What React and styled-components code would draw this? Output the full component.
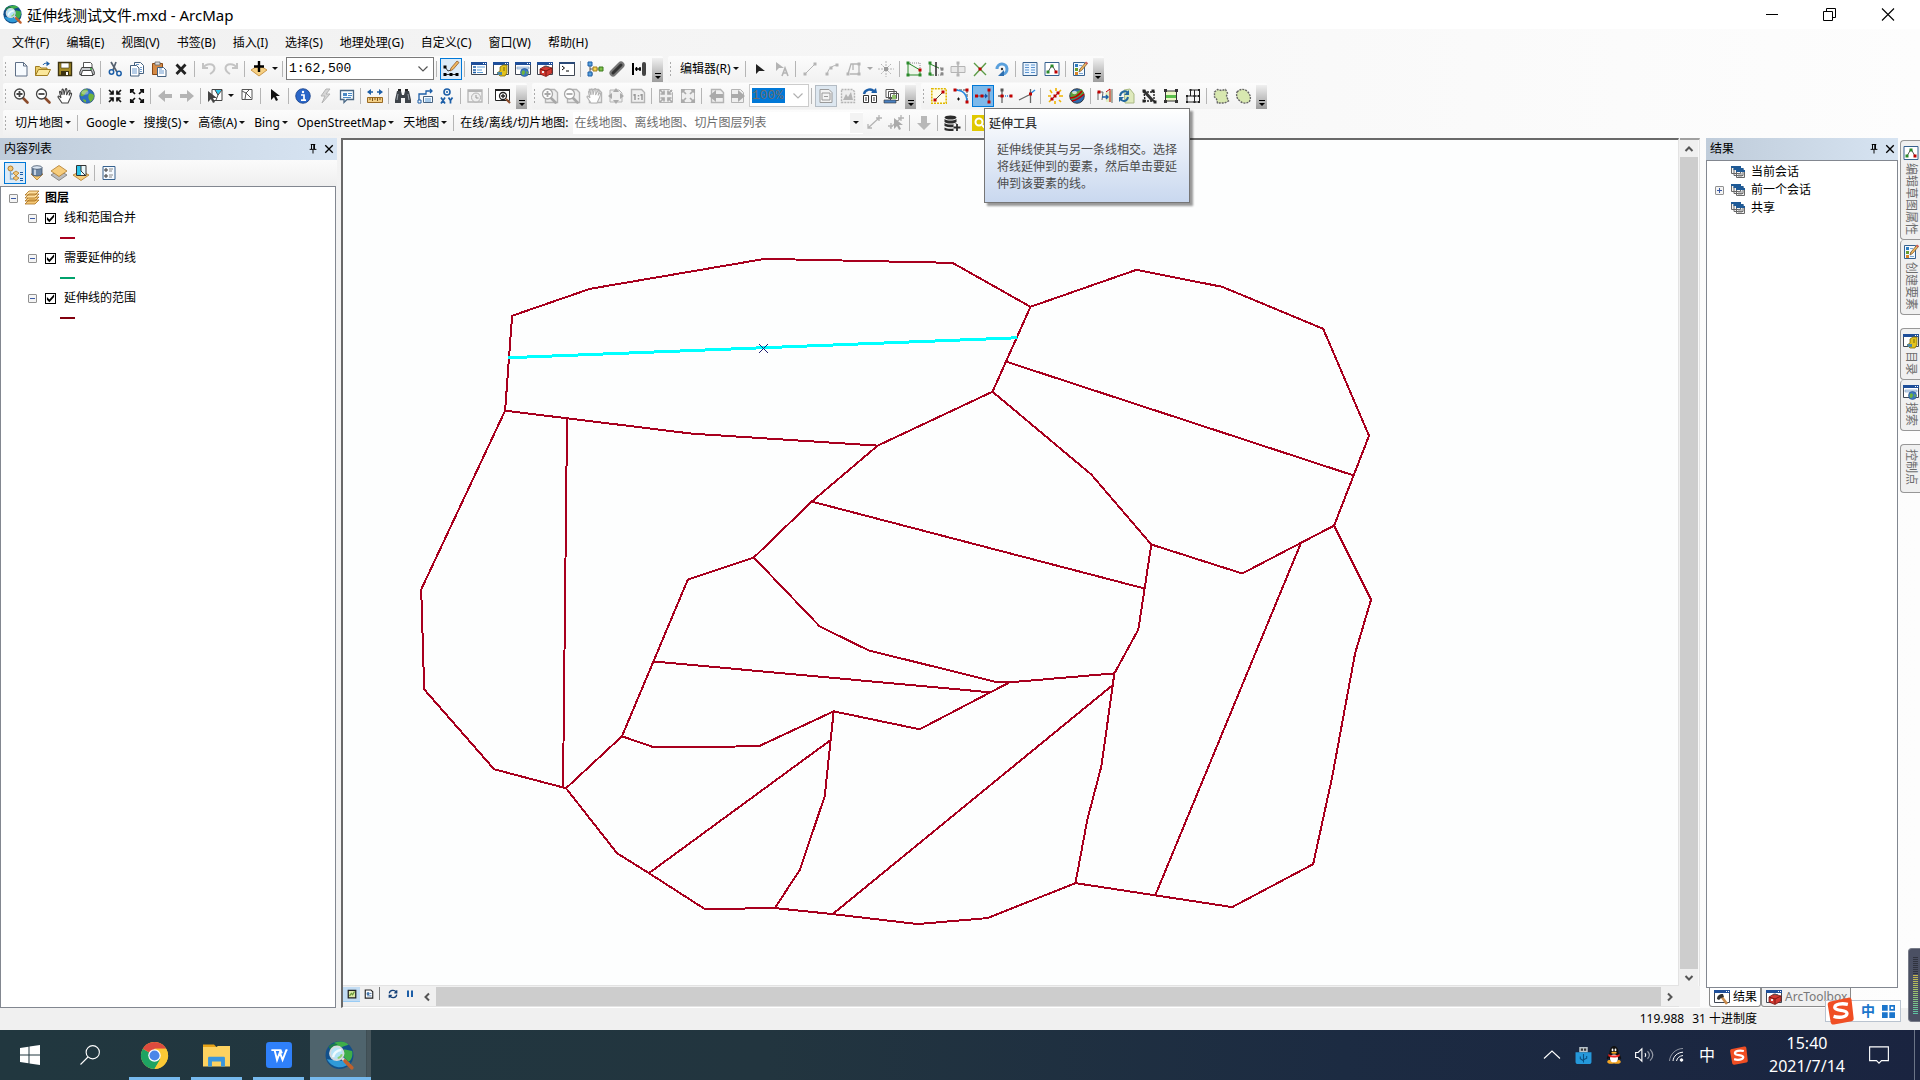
import React from "react";
import styled, { createGlobalStyle, css } from "styled-components";

const GlobalStyle = createGlobalStyle`
  * {
    box-sizing: border-box;
  }
  body {
    margin: 0;
    background: #f0f0f0;
  }
  body, button, input, select {
    font-family: "Noto Sans", "Noto Sans CJK SC", sans-serif;
    font-size: 12px;
    line-height: 18px;
    color: #000;
  }
  button {
    padding: 0;
    border: 0;
    background: transparent;
    cursor: default;
  }
`;

/* ---------- icons, all on a 16 x 16 grid ---------- */

const GREY = "#b4b4b4";
const BLUE = "#1d5fa8";
const RED = "#c00000";
const GREEN = "#2a8a2a";

const lens = (sign, frame = "#444", handle = "#8a4a2a", x = 0) => (
  <g fill="none">
    <path d={`M${x + 10} 10l4.5 4.5`} stroke={handle} strokeWidth="2.6" strokeLinecap="round" />
    <circle cx={x + 6.5} cy="6" r="5" fill="#fff" stroke={frame} strokeWidth="1.3" />
    <path d={sign === "+" ? `M${x + 3.5} 6h6M${x + 6.5} 3v6` : `M${x + 3.5} 6h6`} stroke={frame} strokeWidth="1.8" />
  </g>
);

const win = (
  <>
    <path d="M.5 1.5h15v12h-15z" fill="#fff" stroke="#3f4652" />
    <path d="M0 1h16v3H0z" fill="#1f4f9a" />
    <path d="M12 2h1v1h-1zM14 2h1v1h-1z" fill="#fff" />
  </>
);

const greyPage = <path d="M3.5 1.5h9l3 3v10h-12z" fill="#efefef" stroke={GREY} strokeWidth="1.4" />;

const hand = (c) => (
  <path d="M5 15l-4-6c0-1.5 1.5-1 3 1L2.5 4c.5-1.5 1.5-.8 2.5 3L5 1.8c.8-1.5 1.8-.8 2 5L8.5 1c1-1 2-.3 1 6L12 2.500c1.5-.6 1.5.5 0 5l1.5-2.5c1.5 0 1.5 1-.2 5L11 15z" fill="#fff" stroke={c} strokeWidth="1.1" />
);

const shrink = (c) => (
  <path d="M2 2l4 4M14 2l-4 4M2 14l4-4M14 14l-4-4M6 2.5V6H2.5M10 2.5V6h3.5M6 13.5V10H2.5M10 13.5V10h3.5" fill="none" stroke={c} strokeWidth="1.7" />
);

const grow = (c) => (
  <path d="M2 2l4 4M14 2l-4 4M2 14l4-4M14 14l-4-4M1.8 5V1.8H5M14.2 5V1.8H11M1.8 11v3.2H5M14.2 11v3.2H11" fill="none" stroke={c} strokeWidth="1.7" />
);

const arrowL = (c) => <path d="M1 8l7-6v4h7v4H8v4z" fill={c} />;
const arrowR = (c) => <path d="M15 8L8 2v4H1v4h7v4z" fill={c} />;
const pointer = (c, x = 4, y = 2) => (
  <path d={`M${x} ${y}v11l3-3 2 4 2-1-2-4h4z`} fill={c} />
);
const dot = (x, y, c = RED) => <path d={`M${x - 1.5} ${y - 1.5}h3v3h-3z`} fill={c} />;

const globe = (
  <>
    <circle cx="8" cy="8" r="7.3" fill="#2e6fc0" stroke="#1b3d6b" strokeWidth=".6" />
    <path d="M3 3c2-2 5-2 6-1 0 2-2 2-3 4s-3 3-4.5 1.5C1.5 6 2 4 3 3zM10 6c2-1 4 0 5 1.5 0 3-1.5 5-3.5 6.5C10 12 8.5 9 10 6zM4 11l3 1v2.5c-2-.4-3-1.5-3-3.5z" fill="#6fb33c" />
    <ellipse cx="6" cy="4.5" rx="3.5" ry="2.2" fill="#fff" opacity=".35" />
  </>
);

const editSketch = (
  <>
    <path d="M1 1.5h14v13H1z" fill="#fff" stroke="#36618e" />
    <path d="M4 11l4-7 4 7" fill="none" stroke="#555" />
    {dot(8, 5, GREEN)}
    {dot(4, 11, GREEN)}
    {dot(12, 11)}
  </>
);

const createFeatures = (
  <>
    <path d="M1.5 1.5h11v13h-11z" fill="#f3f9ff" stroke="#36618e" />
    <path d="M3 3h3v3H3z" fill="#2e7dc0" />
    <path d="M3 7h3v3H3z" fill="#6a9f2c" />
    <path d="M3 11h3v3H3z" fill="#d98526" />
    <path d="M7 4.5h3M7 8.5h2M7 12.5h4" stroke="#7ba7d4" />
    <path d="M7 11l1-3 6-7 1.5 1.5-6 7z" fill="#f2b860" stroke="#7a5a30" strokeWidth=".8" />
    <path d="M13 2l1-1.5 2 1.5-1.2 1.5z" fill="#d06060" />
  </>
);

const catalogIcon = (
  <>
    {win}
    <path d="M7 6l3-2h4v8l-2 3H7l-3-3 3-2z" fill="#e2c21c" stroke="#7d6a08" strokeWidth=".8" />
    <path d="M4 11h5v3H5z" fill="#4c88a8" />
    <path d="M10 7h2M10 9h2" stroke="#7d6a08" />
  </>
);

const searchWin = (
  <>
    {win}
    <path d="M2 6h12v2H2z" fill="#cfe0f2" stroke="#7d9cc0" strokeWidth=".6" />
    <circle cx="9.5" cy="11.5" r="4" fill="#3a78c4" stroke="#24508a" strokeWidth=".6" />
    <path d="M7 10c2-2 3 0 3 1s-1 3-2 3-2-2-1-4zM11 10l2 1-1 3z" fill="#6fb33c" />
  </>
);

const toolbox = (
  <>
    {win}
    <path d="M3 8l5-3 7 2v5l-6 3.500L3 13z" fill="#d23a32" stroke="#7e1712" strokeWidth=".8" />
    <path d="M3 8l6 2 6-3M9 10v5" stroke="#7e1712" fill="none" />
    <path d="M7 6.5l2-1.5 3 1" fill="none" stroke="#555" />
    <path d="M5 10h2v2H5z" fill="#eee" />
  </>
);

const layerStack = (
  <>
    <path d="M1 14l4-4h10l-4 4zM1 11l4-4h10l-4 4z" fill="#f5c876" stroke="#a8701c" strokeWidth=".8" />
    <path d="M1 8l4-4h10l-4 4zM1 5l4-4h10l-4 4z" fill="#ffe0a0" stroke="#a8701c" strokeWidth=".8" />
  </>
);

const windowsCascade = (
  <>
    <path d="M1.5 2.5h9v7h-9zM4 4.5h9v7H4zM6.5 6.5h8v7h-8z" fill="#f4f4f4" stroke="#666" />
    <path d="M1 2h10v2H1zM3.5 4h10v2h-10zM6 6h9v2H6z" fill="#1f5a96" />
    <path d="M8 10h4M8 12h4" stroke="#888" />
  </>
);

const mapBook = (
  <>
    <path d="M2 2h12v12H2z" fill="#dbe8a4" stroke="#222" strokeWidth="2" />
    <path d="M4 11l3-4 2 2 3-5" stroke="#6a9a3a" strokeWidth="2" fill="none" />
  </>
);

const icons = {
  new: <path d="M2.5 1.5h8l3.5 3.5v10h-11.5zM10.5 1.5v3.500h3.5" fill="#f7fbff" stroke="#5e6f86" />,
  open: (
    <>
      <path d="M.5 14.5v-9h4l1.5 1.5h6v2" fill="#e9cd6b" stroke="#a07d22" />
      <path d="M.5 14.5l3-6h12l-3 6z" fill="#fbe89c" stroke="#a07d22" />
      <path d="M8 4c1-2 3-2 5-1.5" stroke={BLUE} fill="none" />
      <path d="M11.5 0l3.5 2.7-3.5 2.5z" fill={BLUE} />
    </>
  ),
  save: (
    <>
      <path d="M1.5 1.5h13v13h-13z" fill="#a58c28" stroke="#3d3413" strokeWidth="1.4" />
      <path d="M4 2h8v5H4z" fill="#fff" stroke="#3d3413" strokeWidth=".6" />
      <path d="M4 10h8v5H4z" fill="#3d3413" />
      <path d="M9 11h2v3H9z" fill="#fff" />
    </>
  ),
  print: (
    <>
      <path d="M4.5 6.5v-5h7l1.5 1.5v3.5" fill="#fff" stroke="#555" />
      <path d="M.8 11l2-4.5h10.5l2 4.5v2.500H.8z" fill="#c9ccd0" stroke="#444" />
      <path d="M3.5 9.5h9l1.5 5h-12z" fill="#fff" stroke="#444" />
      <path d="M11 8h2" stroke="#3ba03b" strokeWidth="1.5" />
    </>
  ),
  cut: (
    <>
      <path d="M4 1l6 10M9 1L6 9" stroke="#55616f" strokeWidth="1.7" />
      <circle cx="4.5" cy="11" r="2.2" fill="none" stroke={BLUE} strokeWidth="1.5" />
      <circle cx="12" cy="12.5" r="2.2" fill="none" stroke={BLUE} strokeWidth="1.5" />
    </>
  ),
  copy: (
    <>
      <path d="M5.5 1.5h6l3 3v8h-9z" fill="#fff" stroke="#44607e" />
      <path d="M1.5 4.5h6l2.5 2.5v8h-8.5z" fill="#fff" stroke="#44607e" />
      <path d="M3 8h5M3 10h5M3 12h5M7 3.5h3M11 6.5h2M11 8.5h2M11 10.5h2" stroke="#6f9ccf" />
    </>
  ),
  paste: (
    <>
      <path d="M1.5 2.5h10v11h-10z" fill="#d58a45" stroke="#8a4a16" />
      <path d="M4 1h5v3H4z" fill="#ddd" stroke="#666" strokeWidth=".8" />
      <path d="M6.5 6.5h6l2.5 2.5v6.500H6.5z" fill="#fff" stroke="#44607e" />
      <path d="M8 10h5M8 12h5M8 8h3" stroke="#6f9ccf" />
    </>
  ),
  delete: <path d="M3.5 3.5l9 9.5M12.5 3.5l-9 9.5" stroke="#222" strokeWidth="2.8" />,
  undo: <path d="M2 2v5h5M2.5 6.5C5 2 13 2 13.5 7c0 3-2 4.5-4.5 6" fill="none" stroke="#c4c4c4" strokeWidth="2" />,
  redo: <path d="M14 2v5H9M13.5 6.5C11 2 3 2 2.5 7c0 3 2 4.5 4.5 6" fill="none" stroke="#c4c4c4" strokeWidth="2" />,
  addData: (
    <>
      <path d="M0 9l8-5 8 5-8 6z" fill="#f6d083" stroke="#c0842c" strokeWidth=".8" />
      <path d="M8 0v11M3 5.5h10" stroke="#000" strokeWidth="2.4" />
    </>
  ),
  editorBar: (
    <>
      <path d="M2 6l3 4 3-1" fill="none" stroke="#333" />
      <path d="M2 13.5h12" stroke="#333" />
      {dot(2, 6, "#000")}
      {dot(2, 13.5, "#000")}
      {dot(8, 13.5, "#000")}
      {dot(14, 13.5, "#000")}
      <path d="M7 10l1-3 6-7 2 1.5-6 7z" fill="#f2b860" stroke="#8a5a30" strokeWidth=".8" />
    </>
  ),
  toc: (
    <>
      {win}
      <path d="M2 6h3M2 9h3M2 11.5h3" stroke={BLUE} strokeWidth="1.5" />
      <path d="M6 6h8M6 9h5M6 11.5h6" stroke="#5b9bd5" />
    </>
  ),
  catalog: catalogIcon,
  search: searchWin,
  toolbox,
  python: (
    <>
      <path d="M.5 1.5h15v13h-15z" fill="#fff" stroke="#3f4652" />
      <path d="M0 1h16v2H0z" fill="#2b4a78" />
      <path d="M3 5l2.5 2L3 9M7 10h3" fill="none" stroke="#000" />
    </>
  ),
  model: (
    <>
      <path d="M3 3v10h3M3 8h11" fill="none" stroke="#555" />
      <path d="M1 1h4v4H1zM1 11h4v4H1z" fill="#57a0dc" stroke={BLUE} />
      <path d="M6 6h4v4H6z" fill="#f7d44c" stroke="#a07d22" />
      <path d="M12 6h4v4h-4z" fill="#7fbf4a" stroke="#3a7a1c" />
    </>
  ),
  attach: (
    <>
      <path d="M4 12l8-8" stroke="#777" strokeWidth="7" strokeLinecap="round" />
      <path d="M4 12l8-8" stroke="#333" strokeWidth="3" strokeLinecap="round" />
    </>
  ),
  width: (
    <>
      <path d="M2 2v12" stroke="#000" strokeWidth="2" />
      <path d="M4 8h6M5.5 6v4M9 6v4" stroke="#000" strokeWidth="1.4" />
      <rect x="11" y="1" width="4" height="14" rx="2" fill="#444" />
    </>
  ),
  editArrow: <path d="M4 3v10l3-3h6z" fill="#222" />,
  editAnno: (
    <>
      <path d="M2 1v9l3-3h5z" fill={GREY} />
      <path d="M8 15l3-8 3 8M9 12h4" stroke={GREY} strokeWidth="1.6" fill="none" />
    </>
  ),
  segLine: (
    <>
      <path d="M3 13L13 3" stroke={GREY} />
      {dot(3, 13, GREY)}
      {dot(13, 3, GREY)}
    </>
  ),
  segArc: (
    <>
      <path d="M3 14C4 8 7 5 13 4" stroke={GREY} fill="none" />
      {dot(3, 13, GREY)}
      {dot(7, 7, GREY)}
      {dot(13, 4, GREY)}
    </>
  ),
  trace: (
    <>
      <path d="M2 13L5 3h8v10H4M7 3v6" stroke={GREY} fill="none" strokeWidth="1.3" />
      {dot(2, 13, GREY)}
      {dot(13, 3, GREY)}
      {dot(13, 13, GREY)}
    </>
  ),
  point: (
    <>
      <path d="M8 0v16M0 8h16M3 3l10 10M13 3L3 13" stroke={GREY} strokeDasharray="2 1" />
      <path d="M6 6h4v4H6z" fill="#999" />
    </>
  ),
  editVertices: (
    <>
      <path d="M2 2v12h12V9L2 2z" fill="#eef6ea" stroke={GREEN} />
      <path d="M2 2h12v7" fill="none" stroke="#888" strokeDasharray="1 1" />
      {dot(2, 2, GREEN)}
      {dot(2, 14, GREEN)}
      {dot(14, 14, GREEN)}
      {dot(14, 9)}
    </>
  ),
  reshape: (
    <>
      <path d="M2 2v12h4M2 3l9 4" fill="none" stroke={GREEN} />
      <path d="M8 1v14" stroke="#222" strokeWidth="1.5" />
      <path d="M10 7h4v7H9" fill="none" stroke="#888" strokeDasharray="1 1" />
      {dot(2, 2, GREEN)}
      {dot(2, 13, GREEN)}
      {dot(14, 8, "#888")}
      {dot(14, 13, "#888")}
    </>
  ),
  cutPoly: (
    <>
      <path d="M1 5.5h14v6H1z" fill="#e8e8e8" stroke={GREY} />
      <path d="M8 1v14" stroke={GREY} strokeWidth="1.5" />
      {dot(8, 2, GREY)}
      {dot(8, 14, GREY)}
    </>
  ),
  split: (
    <>
      <path d="M2 15L14 2M2 2l12 12" stroke="#5c9c46" strokeWidth="1.4" />
      {dot(8, 8)}
    </>
  ),
  rotate: (
    <>
      <path d="M3 8a5 5 0 1 1 6 5" fill="none" stroke="#5aa0dc" strokeWidth="3" />
      <path d="M10 9v6H4z" fill="#2d6fb0" />
      <circle cx="8" cy="8" r="1.2" fill="#333" />
    </>
  ),
  attributes: (
    <>
      <path d="M1 1.5h14v13H1z" fill="#eaf4fe" stroke="#36618e" />
      <path d="M3 4h4M9 4h4M3 6.5h4M9 6.5h4M3 9h4M9 9h4M3 11.5h4M9 11.5h4" stroke="#5b93cf" />
    </>
  ),
  sketch: editSketch,
  create: createFeatures,

  zoomIn: lens("+"),
  zoomOut: lens("-"),
  pan: hand("#444"),
  globe,
  fixedIn: shrink("#111"),
  fixedOut: grow("#111"),
  back: arrowL(GREY),
  forward: arrowR(GREY),
  selectFeat: (
    <>
      <path d="M5 1.5h10v11H5z" fill="#fff" stroke="#444" />
      <path d="M8 2l3 5 3.5-5z" fill="#2cc4ea" />
      <path d="M8 2l3 5-2 5M11 7l4-5" fill="none" stroke="#444" />
      {pointer("#444", 1, 3)}
    </>
  ),
  clearSel: (
    <>
      <path d="M3 1.5h10v10H3z" fill="#fff" stroke="#555" />
      <path d="M3 3l4 2 3-3M7 5l-1 6M7 5l5 5" fill="none" stroke="#555" />
    </>
  ),
  select: pointer("#111", 4, 1),
  identify: (
    <>
      <circle cx="8" cy="8" r="7.3" fill="#2a66c8" stroke="#173f86" strokeWidth=".8" />
      <path d="M6 7h3v5M6 12.2h5" fill="none" stroke="#fff" strokeWidth="1.7" />
      <circle cx="8" cy="4" r="1.2" fill="#fff" />
    </>
  ),
  hyperlink: <path d="M9 1L4 8h4l-3 7 8-9H9l4-5z" fill="#d6d6d6" stroke={GREY} />,
  htmlPopup: (
    <>
      <path d="M1.5 2.5h13v9H8l-3 3v-3H1.5z" fill="#f5fbff" stroke="#4a6885" strokeWidth="1.3" />
      <path d="M4 5h4v3H4z" fill="#4a8ac6" />
      <path d="M9 5.5h4M9 7.5h4M4 9.5h8" stroke="#4a8ac6" />
    </>
  ),
  measure: (
    <>
      <path d="M2 4h4M10 4h4" stroke={BLUE} strokeWidth="1.6" />
      <path d="M4 1L0 4l4 3zM12 1l4 3-4 3z" fill={BLUE} />
      <path d="M.5 9.5h15v5H.5z" fill="#f3cf86" stroke="#9a6a22" />
      <path d="M3 10v2M5.5 10v3M8 10v2M10.5 10v3M13 10v2" stroke="#7a5218" />
    </>
  ),
  find: (
    <>
      <path d="M2 3h4l1 4h2l1-4h4l2 9v3h-6v-5H6v5H0v-3z" fill="#3d4248" />
      <path d="M3 1h3v2H3zM10 1h3v2h-3z" fill="#222" />
      <path d="M3 6l-1 6M13 6l1 6" stroke="#9aa2aa" />
    </>
  ),
  route: (
    <>
      <path d="M2 13V6h4M6 6h3V3h6M13 1l2 2-2 2" fill="none" stroke={BLUE} strokeWidth="1.3" />
      <path d="M6.5 8.5h9v6h-9z" fill="#f3f9ff" stroke="#44607e" />
      <path d="M1 12h3v3H1z" fill="#fff" stroke={BLUE} />
      <path d="M8 11h6M8 13h6" stroke="#5b9bd5" />
    </>
  ),
  goXY: (
    <>
      <circle cx="8" cy="4" r="3" fill="none" stroke={BLUE} strokeWidth="1.6" />
      <circle cx="8" cy="4" r="1" fill={BLUE} />
      <path d="M2 9.5l4 6M6 9.5l-4 6M9.5 9.5l2 3 2-3M11.5 12v3.500" fill="none" stroke={BLUE} strokeWidth="1.7" />
    </>
  ),
  time: (
    <>
      <path d="M1 2h14v12H1z" fill="#f2f2f2" stroke={GREY} strokeWidth="1.3" />
      <path d="M1 3h14" stroke={GREY} strokeWidth="2" />
      <circle cx="9" cy="9.5" r="4.5" fill="#eee" stroke={GREY} />
      <path d="M9 7v3h2.5" fill="none" stroke="#999" />
    </>
  ),
  viewer: (
    <>
      <path d="M.5 1.5h14v11H.5z" fill="#fff" stroke="#222" />
      <path d="M0 1h15v2H0z" fill="#222" />
      <circle cx="8" cy="8" r="3.5" fill="#fff" stroke="#222" strokeWidth="1.3" />
      <path d="M6 8h4M8 6v4" stroke="#222" strokeWidth="1.3" />
      <path d="M11 11l4 4" stroke="#8a4a2a" strokeWidth="2" />
    </>
  ),
  pageZoomIn: (
    <>
      {greyPage}
      {lens("+", "#a8a8a8", "#a8a8a8", -1)}
    </>
  ),
  pageZoomOut: (
    <>
      {greyPage}
      {lens("-", "#a8a8a8", "#a8a8a8", -1)}
    </>
  ),
  pagePan: (
    <>
      {greyPage}
      {hand(GREY)}
    </>
  ),
  pageWhole: (
    <>
      <path d="M2 2h9l3 3v9H2z" fill="#efefef" stroke={GREY} />
      <path d="M8 0l3 4H5zM8 16l3-4H5zM0 8l4-3v6zM16 8l-4-3v6z" fill="#aaa" />
    </>
  ),
  page100: (
    <>
      <path d="M1.5 1.5h10l3 3v10h-13z" fill="#efefef" stroke={GREY} strokeWidth="1.4" />
      <path d="M5 6v6M12 6v6M3.5 7.5l1-1M10.5 7.5l1-1M8.5 7v1.5M8.5 10v1.5" stroke="#999" strokeWidth="1.5" />
    </>
  ),
  pageIn: (
    <>
      <path d="M1.5 1.5h10l3 3v10h-13z" fill="#efefef" stroke={GREY} />
      {shrink("#aaa")}
    </>
  ),
  pageOut: (
    <>
      <path d="M1.5 1.5h10l3 3v10h-13z" fill="#efefef" stroke={GREY} />
      {grow("#aaa")}
    </>
  ),
  pageBack: (
    <>
      {greyPage}
      {arrowL("#aaa")}
    </>
  ),
  pageForward: (
    <>
      <path d="M1.5 1.5h9l3 3v10h-12z" fill="#efefef" stroke={GREY} />
      {arrowR("#aaa")}
    </>
  ),
  draft: (
    <>
      <path d="M2 1.5h9l3 3v10H2z" fill="#f2f2f2" stroke="#9a9a9a" />
      <path d="M4 5h8v7H4zM6 8.5h4" fill="none" stroke="#9a9a9a" />
    </>
  ),
  focusFrame: (
    <>
      <path d="M1.5 1.5h11l2 2v11h-13z" fill="#eee" stroke={GREY} strokeWidth="1.4" strokeDasharray="2 1" />
      <path d="M3 12l3-6 2 3 3-5 2 8z" fill={GREY} />
    </>
  ),
  changeLayout: (
    <>
      <path d="M2 6C3 1 10 0 12 4" fill="none" stroke={BLUE} strokeWidth="2.4" />
      <path d="M9 5h6l-1-5z" fill={BLUE} />
      <path d="M1.5 7.5h5v7h-5zM9.5 7.5h5v7h-5z" fill="#fff" stroke="#333" />
      <path d="M3 10h2M3 12h2M11 10h2M11 12h2" stroke="#333" />
    </>
  ),
  ddp: (
    <>
      <path d="M2 1.5h8v8H2zM4.5 3.5h8v7h-8zM6.5 5.5h8v7h-8z" fill="#fff" stroke="#555" />
      <path d="M8 7h4v4H8z" fill="#8fc26a" />
      <path d="M0 12h12v3H0z" fill="#4a80c0" stroke="#333" strokeWidth=".6" />
    </>
  ),
  constructLine: (
    <>
      <path d="M.8.8h14.4v14.4H.8z" fill="#fffde8" stroke="#e0b800" strokeDasharray="2 1" strokeWidth="1.6" />
      <path d="M4 12l8-8" stroke="#444" />
      {dot(4, 12)}
      {dot(12, 4)}
    </>
  ),
  fillet: (
    <>
      <path d="M2 2h12v12" fill="none" stroke="#444" strokeDasharray="3 1" />
      <path d="M2 2c8 0 12 4 12 12" fill="none" stroke="#2a8ae0" strokeWidth="1.6" />
      {dot(2, 2)}
      {dot(14, 2)}
      {dot(14, 14)}
      <path d="M4 11h3M5.5 9.500v3" stroke="#111" />
    </>
  ),
  extend: (
    <>
      <path d="M1 8h5" stroke="#805050" />
      <path d="M8 8h3" stroke="#1458a8" />
      <path d="M14 1v14" stroke="#7a4040" />
      <path d="M10 5.5l3 2.5-3 2.5z" fill="#1458a8" />
      {dot(1.5, 8)}
      {dot(7, 8)}
      {dot(14, 2)}
      {dot(14, 14)}
    </>
  ),
  trim: (
    <>
      <path d="M5 1v14M1 8h6" stroke="#666" strokeWidth="1.3" />
      <path d="M8 8h7" stroke="#2a8ae0" strokeDasharray="1 1" strokeWidth="1.5" />
      {dot(5, 2, "#555")}
      {dot(5, 8)}
      {dot(14, 8)}
    </>
  ),
  intersect: (
    <>
      <path d="M0 12l10-5M11.5 1v14" stroke="#666" strokeWidth="1.3" />
      <path d="M11 6l5-4" stroke="#2a8ae0" strokeWidth="1.5" />
      {dot(11.5, 6)}
    </>
  ),
  explode: (
    <>
      <path d="M3 2l2 3M9 0v3M14 2l-2 2M1 8h3M12 8h4M2 14l2-2M8 13v3M12 12l2 2" stroke="#f0b400" strokeWidth="1.6" />
      <path d="M5 11l6-6" stroke="#555" />
      {dot(5, 11)}
      {dot(8, 8)}
      {dot(11, 5)}
    </>
  ),
  topoGlobe: (
    <>
      <circle cx="8" cy="8" r="7.3" fill="#2f6cb0" stroke="#222" strokeWidth=".8" />
      <path d="M2 4c4 1 8-1 10-3 2 1 3 4 3 6-4 0-9 4-12 5-2-3-2-6-1-8z" fill="#5c9c3a" />
      <path d="M1 10c5 0 9-3 12-7M3 13c5-1 9-4 12-7" stroke={RED} strokeWidth="1.6" fill="none" />
      <ellipse cx="5.5" cy="4.5" rx="2.5" ry="1.8" fill="#fff" opacity=".7" />
    </>
  ),
  alignEdge: (
    <>
      <path d="M8 5l7-3v12H9z" fill="#e2eec4" />
      <path d="M1 4v8M1 4h5l-1 8M15 1v14" stroke="#666" fill="none" />
      <path d="M9 4l4-3v13" stroke={RED} fill="none" />
      <path d="M5 9h6M9 7l2 2-2 2" stroke={BLUE} strokeWidth="1.4" fill="none" />
      {dot(2, 4)}
    </>
  ),
  replaceGeom: (
    <>
      <path d="M5 2l6-1 4 5v9h-9z" fill="#dfeabc" stroke="#a9b985" />
      <path d="M1 8c1-5 6-6 8-3M9 9c-1 5-6 5-7 2" stroke="#24679e" strokeWidth="2" fill="none" />
      <path d="M10 2v5H5zM0 14V9h5z" fill="#24679e" />
    </>
  ),
  rectify: (
    <>
      <path d="M3 4h10v9H4z" fill="none" stroke="#222" strokeDasharray="2 1" strokeWidth="1.4" />
      <path d="M3 3l9 10" stroke="#333" strokeWidth="3" />
      {dot(3, 3, "#222")}
      {dot(12, 3, "#222")}
      {dot(3, 13, "#222")}
      {dot(14, 14, "#222")}
    </>
  ),
  mergeBand: (
    <>
      <path d="M2.5 3h11v10h-11z" fill="#eef8c8" stroke="#333" />
      <path d="M3 7h10v3H3z" fill="#5ac04a" />
      {dot(2.5, 2.5, "#333")}
      {dot(13.5, 2.5, "#333")}
      {dot(2.5, 13.5, "#333")}
      {dot(13.5, 13.5, "#333")}
    </>
  ),
  gridTopo: (
    <>
      <path d="M5.5 2h9v12H2V8h12M9.5 2v12M5.5 2v6" fill="none" stroke="#222" />
      {[[5.5, 2], [14, 2], [2, 8], [9.5, 8], [14, 8], [2, 14], [9.5, 14], [14, 14]].map(([x, y]) => (
        <path key={`${x}-${y}`} d={`M${x - 1} ${y - 1}h2v2h-2z`} fill="#222" />
      ))}
    </>
  ),
  generalize: <path d="M1.5 4l3-2.5 4 1 4-1 2 3.5-1 3 2 5-4 2h-7l-1-4-2-2z" fill="#d8e8b0" stroke="#666" strokeDasharray="2 1" strokeWidth="1.4" />,
  smooth: <path d="M2 4c4-4 8-3 11 0 3 4 3 7 1 10-4 2-7 1-9-1-3-2-4-5-3-9z" fill="#d8e8b0" stroke="#666" strokeDasharray="2 1" strokeWidth="1.4" />,

  addLine: (
    <>
      <path d="M2 13L13 3M13 0v6M10 3h6M2 9v4h4" stroke={GREY} strokeWidth="1.3" fill="none" />
    </>
  ),
  pickLine: (
    <>
      <path d="M2 13L13 3M13 0v6M10 3h6M0 11h5M3 8v6" stroke={GREY} strokeWidth="1.3" fill="none" />
      {pointer("#aaa", 6, 3)}
    </>
  ),
  download: <path d="M5 1h6v7h4l-7 7-7-7h4z" fill="#b8b8b8" />,
  addDb: (
    <>
      <ellipse cx="6.5" cy="2.5" rx="6" ry="2" fill="#2c2c2c" />
      <path d="M.5 4c3 2 9 2 12 0v3c-3 2-9 2-12 0zM.5 8c3 2 9 2 12 0v1h-3v3c-3 .5-6 .3-9-1zM.5 12.5c2 1.3 6 1.6 9 1V16c-3 .3-7 0-9-1z" fill="#2c2c2c" />
      <path d="M13 9v7M9.5 12.5h7" stroke="#2c2c2c" strokeWidth="1.8" />
    </>
  ),
  magnifier: (
    <>
      <path d="M0 0h16v16H0z" fill="#e0c800" />
      <circle cx="7" cy="7" r="3.5" fill="none" stroke="#fff" strokeWidth="2" />
      <path d="M10 10l3 3" stroke="#fff" strokeWidth="2" />
    </>
  ),

  listDrawing: (
    <>
      <circle cx="3.5" cy="3.5" r="2.5" fill="#f5c876" stroke="#b07a2a" />
      <path d="M3.5 6v8H7M3.5 9H6" stroke="#7aa5cc" fill="none" strokeWidth="1.3" />
      <path d="M6 8l3-2 3 2-3 3zM6 13l3-2 3 2-3 2.5z" fill="#f5c876" stroke="#b07a2a" strokeWidth=".8" />
      <path d="M13 7.5h3M13 9.5h3M13 13.5h3M13 15.5h3" stroke={BLUE} />
    </>
  ),
  listSource: (
    <>
      <path d="M2 9h12l-6 6z" fill="#f6c86e" stroke="#b07a2a" strokeWidth=".8" />
      <path d="M3 2.5v7c2 2 8 2 10 0v-7z" fill="#6c86a4" stroke="#3d4f66" strokeWidth=".8" />
      <path d="M6 4v6" stroke="#c4d2e2" strokeWidth="2" />
      <ellipse cx="8" cy="2.5" rx="5" ry="1.8" fill="#dbe6f2" stroke="#3d4f66" strokeWidth=".8" />
    </>
  ),
  listVisibility: (
    <>
      <path d="M0 10l8-5 8 5-8 5.500z" fill="#bcbcbc" stroke="#777" strokeWidth=".8" />
      <path d="M0 6l8-5.5L16 6l-8 5.500z" fill="#f7cd7c" stroke="#b07a2a" strokeWidth=".8" />
    </>
  ),
  listSelection: (
    <>
      <path d="M0 10l8-4 8 4-8 5.500z" fill="#f7cd7c" stroke="#b07a2a" strokeWidth=".8" />
      <path d="M3.500.5h9.5v10H3.5z" fill="#e8f8fc" stroke="#333" />
      <path d="M4 1h4v9H4z" fill="#2cc4ea" />
      <path d="M8 1v5l4 4" fill="none" stroke="#333" />
    </>
  ),
  options: (
    <>
      <path d="M2 1.5h12v13H2z" fill="#f5faff" stroke="#36618e" />
      <path d="M8 4h4M8 6h3M8 10h4M8 12h3" stroke="#888" />
      <circle cx="5" cy="5" r="1.2" fill="none" stroke="#222" />
      <circle cx="5" cy="11" r="1.2" fill="none" stroke="#222" />
    </>
  ),
  layers: layerStack,
  cascade: windowsCascade,
  dataView: mapBook,
  layoutView: (
    <>
      <path d="M2 1.5h9l3 3v10H2z" fill="#fff" stroke="#222" strokeWidth="1.8" />
      <path d="M5 6h3v3H5zM9 7h3M5 11h7" stroke="#2d5f96" fill="#5b9bd5" strokeWidth="1.3" />
    </>
  ),
  refresh: (
    <path d="M2 7c1-6 9-6 11-2M14 2v4h-4M14 9c-1 6-9 6-11 2M2 14v-4h4" fill="none" stroke="#123f78" strokeWidth="2" />
  ),
  pause: <path d="M2 1h4v13H2zM10 1h4v13h-4z" fill={BLUE} />,
  hammer: (
    <>
      {win}
      <path d="M7 7l6 8" stroke="#c98b4c" strokeWidth="2.6" />
      <path d="M3 10c0-3 2-5 6-5l1 3-3 1-2 2z" fill="#333" />
    </>
  ),
  pin: <path d="M5 2h6M6 2v6M10 2v6M9 2v6M3.5 8.5h9M8 9v5" fill="none" stroke="#000" strokeWidth="1.3" />,
  close: <path d="M3 3l10 10M13 3L3 13" stroke="#000" strokeWidth="1.8" />,
  chevDown: <path d="M3.5 5.5L8 10l4.5-4.5" fill="none" stroke="#555" strokeWidth="1.2" />,
  chevDim: <path d="M3.5 5.5L8 10l4.5-4.5" fill="none" stroke="#b0b0b0" strokeWidth="1.2" />,
  arrUp: <path d="M4.5 10L8 6.5l3.5 3.5" fill="none" stroke="#555" strokeWidth="2" />,
  arrDown: <path d="M4.5 6L8 9.5 11.5 6" fill="none" stroke="#555" strokeWidth="2" />,
  arrLeft: <path d="M10 4.5L6.5 8l3.5 3.5" fill="none" stroke="#555" strokeWidth="2" />,
  arrRight: <path d="M6 4.5L9.5 8 6 11.5" fill="none" stroke="#555" strokeWidth="2" />,

  winMin: <path d="M2 7.5h12" stroke="#000" />,
  winRestore: <path d="M1.5 4.5h9v9h-9zM4.5 4.5v-3h9v9h-3" fill="none" stroke="#000" />,
  winClose: <path d="M2 1.5l12 12M14 1.5l-12 12" stroke="#000" strokeWidth="1.1" />,

  arcmap: (
    <>
      <circle cx="8" cy="7.8" r="7.7" fill="#12508a" />
      <path d="M1 10c3 5 9 6 13 2l-4-1z" fill="#2f9ad8" />
      <path d="M5 1c3-1 6-1 8 1l-3 1-2 1zM10.5 4.5l4.500 1c.5 3-.5 5-2 6l-2.5-2.5z" fill="#3fae49" />
      <path d="M2 3c2-2 4-2 5-1L3 5z" fill="#1d7a4a" />
      <circle cx="6.5" cy="6.8" r="3.7" fill="#b4e4f8" stroke="#d5dade" strokeWidth="1.1" />
      <path d="M4.500 9c0-2 2-4 4.500-4" stroke="#eefaff" strokeWidth="1.4" fill="none" />
      <path d="M7 9.5c1-.2 2-1 2.300-2.200" stroke="#8ad06a" fill="none" />
      <path d="M9.5 9.5l2 2" stroke="#ddd" strokeWidth="1.6" />
      <path d="M11 11l3.8 3.8" stroke="#c0612c" strokeWidth="2" strokeLinecap="round" />
    </>
  ),
  start: <path d="M0 2.3L6.8 1.3v6.200H0zM7.6 1.2L16 0v7.5H7.6zM0 8.3h6.8v6.2L0 13.6zM7.6 8.3H16V16l-8.4-1.3z" fill="#fff" />,
  taskSearch: (
    <>
      <circle cx="10.2" cy="5.8" r="5.3" fill="none" stroke="#fff" strokeWidth=".9" />
      <path d="M6.4 9.6L.4 15.6" stroke="#fff" strokeWidth=".9" />
    </>
  ),
  chrome: (
    <>
      <circle cx="8" cy="8" r="8" fill="#fbc935" />
      <path d="M8 8L1.07 4A8 8 0 0 0 8 16l3.5-6z" fill="#1ea362" />
      <path d="M8 8L1.07 4A8 8 0 0 1 14.93 4H8z" fill="#dd4b3e" />
      <path d="M8 4h6.93A8 8 0 0 1 8 16l3.5-6z" fill="#fbc935" />
      <circle cx="8" cy="8" r="3.7" fill="#fff" />
      <circle cx="8" cy="8" r="3" fill="#4a86e8" />
    </>
  ),
  explorer: (
    <>
      <path d="M0 1.5h6.5L8 3H0z" fill="#e8a317" />
      <path d="M0 3h8l.8-.7H16v12.200H0z" fill="#fdd260" />
      <path d="M3 14.500V9.6c0-.5.3-.8.8-.8h8.4c.5 0 .8.3.8.8v4.9h-2.300V11.5H5.3v3z" fill="#3a96dd" />
    </>
  ),
  wps: (
    <>
      <rect width="16" height="16" rx="2" fill="#2f80fa" />
      <path d="M3.3 5h2l1.5 6 1.7-4.5L10.2 11l2.3-6h.7M5.3 5H9l.8 2" fill="none" stroke="#fff" strokeWidth="1.2" />
    </>
  ),
  sogou: (
    <>
      <path d="M2.5 2.6L12.8.4c1-.2 1.6.3 1.8 1.2l1.2 10.6c.1.9-.3 1.5-1.2 1.7L4.600 15.7c-1 .2-1.7-.2-1.9-1.1L1 4.6c-.2-1 .4-1.8 1.500-2z" fill="#f04e23" />
      <path d="M12.5 4.2C9 3.4 5 4 5 6c0 2.3 7.2 1 7 3.5-.2 2.2-4.8 2.5-7.7 1.6" fill="none" stroke="#fff" strokeWidth="1.9" />
    </>
  ),
  trayUp: <path d="M0 11.5L8 4l8 7.5" fill="none" stroke="#fff" strokeWidth="1.1" />,
  usb: (
    <>
      <path d="M4 0h8v5H4z" fill="#b9c3c9" />
      <path d="M5.5 1.5h2v2h-2zM8.5 1.5h2v2h-2z" fill="#333" />
      <path d="M.5 5h15v9c0 1-1 2-2 2h-11c-1 0-2-1-2-2z" fill="#2598da" />
      <path d="M8 6.500v8M5 9v2l3 2M11 8.5v2L8 12" fill="none" stroke="#0a4f80" />
    </>
  ),
  qq: (
    <>
      <path d="M2 14c0-2 3-2 3-1l3 .5 3-.5c0-1 3-1 3 1s-3 2-6 1.5C5 16 2 16 2 14z" fill="#f5a623" />
      <path d="M4 6c0-8 8-8 8 0 2 3 3 5 2 6-1-.5-1-1-1.5-1.5C12 15 4 15 3.5 10.5 3 11 3 11.5 2 12 1 11 2 9 4 6z" fill="#111" />
      <ellipse cx="8" cy="11" rx="3.5" ry="3.5" fill="#fff" />
      <path d="M3 7c3 2 7 2 10 0v2c-3 1.5-7 1.5-10 0z" fill="#e22" />
      <ellipse cx="6.7" cy="3.5" rx=".8" ry="1.2" fill="#fff" />
      <ellipse cx="9.3" cy="3.5" rx=".8" ry="1.2" fill="#fff" />
      <ellipse cx="8" cy="6" rx="2.5" ry=".8" fill="#f5a623" />
    </>
  ),
  speaker: (
    <g fill="none" stroke="#fff" strokeWidth=".9">
      <path d="M.5 6h2l3-3v10l-3-3h-2z" />
      <path d="M8 6.5c.8 1 .8 2 0 3" />
      <path d="M10 5c2 2 2 4 0 6M12 3.5c3 3 3 6 0 9" opacity=".55" />
    </g>
  ),
  wifi: (
    <g fill="none" stroke="#fff">
      <path d="M1.5 14C2 7 8 1.5 15 1.5" opacity=".5" />
      <path d="M5 14C5.5 9 9.5 5.5 15 5.2M8.5 14c.5-3 3-5 6.5-5.5" />
      <circle cx="13.5" cy="13" r="1.3" fill="#fff" />
    </g>
  ),
  notify: <path d="M.5 1.5h15v11H10L8 14.5 6 12.5H.5z" fill="none" stroke="#fff" strokeWidth=".9" />,
  imeGrid: (
    <>
      <path d="M0 0h7v7H0zM0 9h7v7H0zM9 9h7v7H9z" fill="#1c76cc" />
      <path d="M10 1h5v5h-5z" fill="none" stroke="#1c76cc" strokeWidth="2" />
    </>
  ),
};

const Svg = styled.svg`
  display: block;
  flex: none;
  overflow: visible;
`;

const Icon = ({ name, size = 16 }) => (
  <Svg width={size} height={size} viewBox="0 0 16 16" aria-hidden="true">
    {icons[name]}
  </Svg>
);

/* ---------- window chrome ---------- */

const Window = styled.div`
  height: 100vh;
  min-height: 640px;
  display: flex;
  flex-direction: column;
  overflow: hidden;
  background: linear-gradient(90deg, #f0f0f0, #fdfdfd);
`;

const TitleBar = styled.header`
  height: 29px;
  display: flex;
  align-items: center;
  padding: 0 3px;
  background: #fff;
`;

const Title = styled.h1`
  flex: 1;
  margin: 0 0 0 5px;
  font-size: 15px;
  font-weight: 400;
  line-height: 20px;
`;

const WindowButton = styled.button`
  width: 58px;
  height: 29px;
  display: grid;
  place-items: center;
`;

const MenuBar = styled.nav`
  height: 26px;
  display: flex;
  align-items: center;
  gap: 1px;
  padding: 1px 4px 0;
`;

const MenuItem = styled.button`
  padding: 0 8px;
  white-space: nowrap;
`;

/* ---------- toolbars ---------- */

const ToolRow = styled.div`
  height: 27px;
  display: flex;
  align-items: center;
  padding-left: 3px;
  gap: 5px;
`;

const Bar = styled.div`
  height: 26px;
  display: flex;
  align-items: center;
  background: linear-gradient(#fcfcfc, #f1f1f1);
  border-radius: 2px;
`;

const Grip = styled.span`
  width: 7px;
  height: 15px;
  background: radial-gradient(circle, #aaa 1px, transparent 1px) 0 0 / 5px 4px repeat-y;
`;

const Sep = styled.span`
  width: 1px;
  height: 16px;
  margin: 0 3px 0 2px;
  background: #b5b5b5;
`;

const ToolButton = styled.button`
  width: 22px;
  height: 22px;
  display: grid;
  place-items: center;
  border: 1px solid transparent;
  ${({ $state }) =>
    $state === "on" &&
    css`
      border-color: #0078d7;
      background: #dcebf8;
    `}
  ${({ $state }) =>
    $state === "hot" &&
    css`
      border-color: #0078d7;
      background: #7db9ea;
    `}
  ${({ $state }) =>
    $state === "dim" &&
    css`
      border-color: #b4bcc4;
      background: #dde7f0;
    `}
`;

const Caret = styled.span`
  width: 10px;
  display: grid;
  place-items: center;
  &::before {
    content: "";
    border: 3px solid transparent;
    border-top-color: ${({ $dim }) => ($dim ? "#a8a8a8" : "#111")};
    border-bottom: 0;
  }
`;

const TextButton = styled.button`
  height: 22px;
  display: flex;
  align-items: center;
  padding: 0 2px 0 5px;
  white-space: nowrap;
`;

const Overflow = styled.button`
  width: 11px;
  height: 24px;
  margin: 2px 0 0 2px;
  display: flex;
  flex-direction: column;
  align-items: center;
  justify-content: flex-end;
  gap: 2px;
  padding-bottom: 3px;
  background: linear-gradient(#f0f0f0, #9c9c9c);
  &::before {
    content: "";
    width: 6px;
    height: 1px;
    background: #000;
  }
  &::after {
    content: "";
    border: 3px solid transparent;
    border-top-color: #000;
    border-bottom: 0;
  }
`;

const ScaleBox = styled.div`
  width: 148px;
  height: 23px;
  display: grid;
  align-items: center;
  background: #fff;
  border: 1px solid #7a7a7a;
  & > * {
    grid-area: 1 / 1;
  }
  & > svg {
    justify-self: end;
    margin-right: 2px;
    pointer-events: none;
  }
`;

const ScaleSelect = styled.select`
  width: 100%;
  padding: 0 2px;
  border: 0;
  background: transparent;
  appearance: none;
  font-family: "Liberation Mono", monospace;
  font-size: 13px;
`;

const ZoomBox = styled.div`
  width: 60px;
  height: 23px;
  display: flex;
  align-items: center;
  justify-content: space-between;
  padding: 0 2px;
  background: #fff;
  border: 1px solid #ccc;
`;

const ZoomInput = styled.input`
  width: 33px;
  height: 15px;
  padding: 0;
  border: 0;
  background: #0078d7;
  color: #6d6d6d;
  font-family: "Liberation Mono", monospace;
  font-size: 13px;
`;

const MapListLabel = styled.label`
  padding-left: 3px;
  white-space: nowrap;
`;

const MapListBox = styled.div`
  width: 290px;
  height: 22px;
  margin-left: 4px;
  display: grid;
  align-items: center;
  background: #fff;
  & > * {
    grid-area: 1 / 1;
  }
  & > span {
    width: 13px;
    height: 20px;
    justify-self: end;
    background: #f3f3f3;
    pointer-events: none;
  }
`;

const MapListSelect = styled.select`
  width: 100%;
  padding: 0 2px;
  border: 0;
  background: transparent;
  appearance: none;
  color: #6d6d6d;
`;

const TipAnchor = styled.span`
  position: relative;
  display: flex;
`;

const Tip = styled.div`
  position: absolute;
  z-index: 5;
  top: 23px;
  left: 12px;
  width: 206px;
  height: 95px;
  padding: 6px 12px 0;
  border: 1px solid #767676;
  background: linear-gradient(#fff, #c9d8ef);
  box-shadow: 3px 3px 2px rgba(0, 0, 0, 0.4);
  color: #4c4c4c;
`;

const TipTitle = styled.strong`
  display: block;
  margin: 0 0 8px -8px;
  color: #333;
  font-weight: 500;
`;

const TipText = styled.p`
  margin: 0;
  line-height: 17px;
`;

/* ---------- docked panels and map ---------- */

const Main = styled.main`
  flex: 1;
  min-height: 0;
  display: grid;
  grid-template-columns: 337px minmax(0, 1fr) 192px 22px;
  grid-template-rows: minmax(0, 1fr);
  padding-top: 2px;
`;

const Panel = styled.section`
  display: flex;
  flex-direction: column;
  min-height: 0;
`;

const PanelHead = styled.h2`
  height: 22px;
  margin: 0;
  padding: 0 0 0 4px;
  display: flex;
  align-items: center;
  background: linear-gradient(90deg, #bfccda, #d7e4f2);
  font-size: 12px;
  font-weight: 400;
  & > span {
    flex: 1;
  }
  & > button {
    width: 16px;
    height: 16px;
    display: grid;
    place-items: center;
  }
`;

const PanelTools = styled.div`
  height: 26px;
  display: flex;
  align-items: center;
  padding-left: 4px;
  background: linear-gradient(#fbfbfb, #efefef);
`;

const Tree = styled.ul`
  flex: 1;
  margin: 0 ${({ $side }) => ($side ? "0" : "1px")} 0 0;
  padding: ${({ $side }) => ($side ? "2px" : "1px")} 0 0;
  list-style: none;
  background: #fff;
  border: 1px solid #828790;
`;

const TreeRow = styled.li`
  height: ${({ $compact }) => ($compact ? "18px" : "20px")};
  display: flex;
  align-items: center;
  padding-left: ${({ $indent }) => $indent}px;
  font-weight: ${({ $bold }) => ($bold ? 700 : 400)};
`;

const Expander = styled.button`
  width: 9px;
  height: 9px;
  display: grid;
  place-items: center;
  border: 1px solid #919191;
  border-radius: 1px;
  background:
    linear-gradient(#3b5aa5, #3b5aa5) center / 5px 1px no-repeat,
    linear-gradient(#3b5aa5, #3b5aa5) center / ${({ $closed }) => ($closed ? "1px 5px" : "0 0")} no-repeat,
    #f4f4f4;
`;

const LayerLabel = styled.label`
  display: flex;
  align-items: center;
  gap: 8px;
  margin-left: 8px;
`;

const LayerCheck = styled.input`
  appearance: none;
  width: 11px;
  height: 11px;
  margin: 0;
  display: grid;
  place-items: center;
  border: 1px solid #000;
  background: #fff;
  &:checked::before {
    content: "";
    width: 9px;
    height: 9px;
    background: #000;
    clip-path: polygon(10% 40%, 38% 66%, 90% 8%, 90% 40%, 38% 96%, 10% 70%);
  }
`;

const RowIcon = styled.span`
  margin: 0 5px 0 6px;
`;

const Swatch = styled.span`
  width: 15px;
  height: 2px;
  background: ${({ $color }) => $color};
`;

const MapFrame = styled.section`
  margin: 0 6px 0 4px;
  display: grid;
  grid-template-columns: minmax(0, 1fr) 20px;
  grid-template-rows: minmax(0, 1fr) 20px;
  gap: 1px;
  border-left: 2px solid #696969;
  border-bottom: 1px solid #fff;
  background: #f0f0f0;
`;

const Canvas = styled.div`
  display: flex;
  background: #fdfefe;
  border-top: 2px solid #696969;
  border-right: 1px solid #e3e3e3;
  border-bottom: 1px solid #e3e3e3;
`;

const MapSvg = styled.svg`
  flex: 1;
  min-width: 0;
  height: 100%;
`;

const VScroll = styled.div`
  display: flex;
  flex-direction: column;
  align-items: stretch;
  border-top: 2px solid #a0a0a0;
  border-right: 1px solid #e3e3e3;
  box-shadow: inset -1px 0 #f8f8f8;
`;

const HScroll = styled.div`
  display: flex;
  align-items: stretch;
  border-bottom: 1px solid #e3e3e3;
`;

const ScrollButton = styled.button`
  width: 18px;
  height: 17px;
  display: grid;
  place-items: center;
  align-self: ${({ $row }) => ($row ? "center" : "auto")};
`;

const Thumb = styled.div`
  flex: 1;
  background: #cdcdcd;
  margin: ${({ $row }) => ($row ? "0" : "0 1px 0 0")};
`;

const ViewButton = styled.button`
  width: 17px;
  height: 15px;
  display: grid;
  place-items: center;
  border-bottom: 1px solid ${({ $on }) => ($on ? "#99ccf5" : "transparent")};
  background: ${({ $on }) => ($on ? "#c2dcf3" : "transparent")};
`;

const ViewSep = styled.span`
  width: 1px;
  height: 13px;
  margin: 0 4px 0 2px;
  background: #777;
`;

const BottomTabs = styled.div`
  height: 20px;
  display: flex;
  align-items: flex-start;
  padding-left: 3px;
`;

const BottomTab = styled.button`
  height: 19px;
  display: flex;
  align-items: center;
  gap: 3px;
  padding: 0 3px 0 4px;
  border: 1px solid #8a8a8a;
  border-top: 0;
  border-radius: 0 0 3px 3px;
  background: ${({ $on }) => ($on ? "#fff" : "#f0f0f0")};
  color: ${({ $on }) => ($on ? "#000" : "#777")};
`;

const SideTabs = styled.aside`
  display: flex;
  flex-direction: column;
  gap: 13px;
  padding: 2px 0 0 2px;
`;

const SideTabGroup = styled.div`
  display: flex;
  flex-direction: column;
`;

const SideTab = styled.button`
  display: flex;
  flex-direction: column;
  align-items: center;
  gap: 2px;
  padding: 4px 0 ${({ $plain }) => ($plain ? "7px" : "4px")};
  border: 1px solid #979797;
  border-right: 0;
  border-radius: 4px 0 0 4px;
  background: #f0f0f0;
  & + & {
    border-top: 0;
  }
  & > span {
    writing-mode: vertical-rl;
    text-orientation: sideways;
    color: #6d6d6d;
  }
`;

const StatusBar = styled.footer`
  height: 22px;
  display: flex;
  align-items: center;
  justify-content: flex-end;
  gap: 8px;
  padding-right: 163px;
  background: #f0f0f0;
`;

/* ---------- desktop taskbar ---------- */

const TaskBar = styled.div`
  height: 50px;
  display: flex;
  align-items: stretch;
  background: linear-gradient(90deg, #21373f, #22353f 40%, #1c2b42 70%, #1a2440);
  color: #fff;
`;

const TaskButton = styled.button`
  width: 60px;
  display: grid;
  place-items: center;
`;

const AppButton = styled.button`
  width: ${({ $on }) => ($on ? "61px" : "51px")};
  padding-top: 3px;
  display: grid;
  place-items: center;
  border-bottom: 3px solid #76b9ed;
  background: ${({ $on }) => ($on ? "linear-gradient(90deg, #4f646d 56px, #36464c 56px, #46555b 57px)" : "transparent")};
`;

const Apps = styled.div`
  flex: 1;
  display: flex;
  gap: 11px;
  padding-left: 9px;
  & > :last-child {
    margin-left: -5px;
    padding-right: 2px;
  }
`;

const Tray = styled.div`
  display: flex;
  align-items: center;
  gap: 1px;
  padding-right: 5px;
`;

const TrayButton = styled.button`
  width: 30px;
  height: 50px;
  display: grid;
  place-items: center;
  color: #fff;
  font-size: 16px;
`;

const Clock = styled.time`
  width: 106px;
  font-size: 16px;
  line-height: 23px;
  text-align: center;
`;

const NotifyButton = styled(TrayButton)`
  width: 54px;
  padding-right: 17px;
  border-right: 1px solid #6b7587;
`;

const ImeBar = styled.div`
  position: fixed;
  right: 19px;
  bottom: 58px;
  height: 22px;
  display: flex;
  align-items: center;
  gap: 7px;
  padding-right: 5px;
  background: #fff;
  border: 1px solid #b9c3cf;
  color: #1c76cc;
  font-weight: 700;
  font-size: 14px;
`;

const LevelMeter = styled.div`
  position: fixed;
  right: 0;
  bottom: 58px;
  width: 12px;
  height: 74px;
  padding: 8px 2px 7px 4px;
  border-radius: 4px 0 0 4px;
  background: #4b5063;
  border: 1px solid #777b88;
  border-right: 0;
  &::before {
    content: "";
    display: block;
    height: 100%;
    background:
      repeating-linear-gradient(transparent 0 1px, #4b5063 1px 2px),
      linear-gradient(#30333f 30%, #c9b54a 30%, #9fc46a 60%, #5cc4a4);
  }
`;

/* ---------- content ---------- */

const menus = ["文件(F)", "编辑(E)", "视图(V)", "书签(B)", "插入(I)", "选择(S)", "地理处理(G)", "自定义(C)", "窗口(W)", "帮助(H)"];

const onlineMaps = ["Google", "搜搜(S)", "高德(A)", "Bing", "OpenStreetMap", "天地图"];

const layers = [
  { name: "线和范围合并", color: "#a8001e" },
  { name: "需要延伸的线", color: "#00a26c" },
  { name: "延伸线的范围", color: "#82000e" },
];

// "|" draws a separator, "v" a drop-down caret
const standardTools = ["new", "open", "save", "print", "|", "cut", "copy", "paste", "delete", "|", "undo", "redo", "|", "addData", "v", "|"];
const windowTools = ["|", "toc", "catalog", "search", "toolbox", "python", "|", "model", "attach", "width"];
const editorTools = ["|", "editArrow", "editAnno", "|", "segLine", "segArc", "trace", "dim", "point", "|", "editVertices", "reshape", "cutPoly", "split", "rotate", "|", "attributes", "sketch", "|", "create"];
const navTools = ["zoomIn", "zoomOut", "pan", "globe", "|", "fixedIn", "fixedOut", "|", "back", "forward", "|", "selectFeat", "v", "clearSel", "|", "select", "|", "identify", "hyperlink", "htmlPopup", "|", "measure", "|", "find", "route", "goXY", "|", "time", "|", "viewer"];
const layoutTools = ["pageZoomIn", "pageZoomOut", "pagePan", "pageWhole", "page100", "|", "pageIn", "pageOut", "|", "pageBack", "pageForward"];
const advancedTools = ["trim", "intersect", "|", "explode", "topoGlobe", "|", "alignEdge", "replaceGeom", "rectify", "mergeBand", "gridTopo", "|", "generalize", "smooth"];

const Tools = ({ items }) =>
  items.map((item, i) => {
    if (item === "|") return <Sep key={i} />;
    if (item === "v") return <Caret key={i} />;
    if (item === "dim") return <Caret key={i} $dim />;
    return (
      <ToolButton key={i} aria-label={item}>
        <Icon name={item} />
      </ToolButton>
    );
  });

// map coordinates of the merged boundary lines
const boundaries = [
  "505,411 512,316 590,289 765,259 953,263 1031,307 993,392 878,446 692,434 505,411",
  "1031,307 1137,270 1223,287 1324,329 1370,436 1335,526 1243,574 1152,545 1092,475 993,392",
  "1007,362 1355,476",
  "567,419 563,788",
  "505,411 421,590 424,690 494,770 566,789 622,737 688,580 754,558 812,502 878,446",
  "812,502 1145,589",
  "754,558 820,627 869,651 998,683 1010,683 1115,674 1139,630 1152,545",
  "653,662 991,693",
  "622,737 654,748 759,747 834,712 920,730 1010,683",
  "834,712 825,797 800,871 775,909",
  "566,789 617,854 649,874 705,910 775,909 833,915 918,925 988,919 1076,884 1233,908 1314,865 1333,778 1356,654 1372,600 1335,526",
  "649,874 832,740",
  "833,915 1113,686",
  "1115,674 1102,767 1088,820 1076,884",
  "1302,543 1156,896",
];

const MapView = () => (
  <MapSvg viewBox="343 140 1336 846" shapeRendering="crispEdges" role="img" aria-label="地图">
    {boundaries.map((points) => (
      <polyline key={points} points={points} fill="none" stroke="#a8001e" strokeWidth="2" />
    ))}
    <path d="M508 358L1018 338" stroke="#00ffff" strokeWidth="3" />
    <path d="M759 344l9 9M768 344l-9 9" stroke="#1c1c70" strokeWidth="1" />
  </MapSvg>
);

export default function App() {
  return (
    <>
      <GlobalStyle />
      <Window>
        <TitleBar>
          <Icon name="arcmap" size={19} />
          <Title>延伸线测试文件.mxd - ArcMap</Title>
          <WindowButton aria-label="最小化"><Icon name="winMin" /></WindowButton>
          <WindowButton aria-label="还原"><Icon name="winRestore" /></WindowButton>
          <WindowButton aria-label="关闭"><Icon name="winClose" /></WindowButton>
        </TitleBar>

        <MenuBar>
          {menus.map((m) => (
            <MenuItem key={m}>{m}</MenuItem>
          ))}
        </MenuBar>

        <ToolRow>
          <Bar>
            <Grip />
            <Tools items={standardTools} />
            <ScaleBox>
              <ScaleSelect aria-label="比例尺">
                <option>1:62,500</option>
              </ScaleSelect>
              <Icon name="chevDown" />
            </ScaleBox>
            <Sep />
            <ToolButton $state="on" aria-label="editorBar"><Icon name="editorBar" /></ToolButton>
            <Tools items={windowTools} />
            <Overflow aria-label="工具条选项" />
          </Bar>
          <Bar>
            <Grip />
            <TextButton>编辑器(R)<Caret /></TextButton>
            <Tools items={editorTools} />
            <Overflow aria-label="工具条选项" />
          </Bar>
        </ToolRow>

        <ToolRow>
          <Bar>
            <Grip />
            <Tools items={navTools} />
            <Overflow aria-label="工具条选项" />
          </Bar>
          <Bar>
            <Grip />
            <Tools items={layoutTools} />
            <ZoomBox>
              <ZoomInput aria-label="缩放" defaultValue="100%" />
              <Icon name="chevDim" />
            </ZoomBox>
            <Sep />
            <ToolButton $state="dim" aria-label="draft"><Icon name="draft" /></ToolButton>
            <Tools items={["focusFrame", "changeLayout", "ddp"]} />
            <Overflow aria-label="工具条选项" />
          </Bar>
          <Bar>
            <Grip />
            <Tools items={["constructLine", "fillet"]} />
            <TipAnchor>
              <ToolButton $state="hot" aria-label="延伸工具"><Icon name="extend" /></ToolButton>
              <Tip role="tooltip">
                <TipTitle>延伸工具</TipTitle>
                <TipText>延伸线使其与另一条线相交。选择将线延伸到的要素，然后单击要延伸到该要素的线。</TipText>
              </Tip>
            </TipAnchor>
            <Tools items={advancedTools} />
            <Overflow aria-label="工具条选项" />
          </Bar>
        </ToolRow>

        <ToolRow>
          <Bar>
            <Grip />
            <TextButton>切片地图<Caret /></TextButton>
            <Sep />
            {onlineMaps.map((name) => (
              <TextButton key={name}>{name}<Caret /></TextButton>
            ))}
            <Sep />
            <MapListLabel htmlFor="map-list">在线/离线/切片地图:</MapListLabel>
            <MapListBox>
              <MapListSelect id="map-list">
                <option>在线地图、离线地图、切片图层列表</option>
              </MapListSelect>
              <Caret />
            </MapListBox>
            <Tools items={["addLine", "pickLine", "|", "download", "|", "addDb", "|", "magnifier"]} />
          </Bar>
        </ToolRow>

        <Main>
          <Panel>
            <PanelHead>
              <span>内容列表</span>
              <button aria-label="自动隐藏"><Icon name="pin" size={12} /></button>
              <button aria-label="关闭"><Icon name="close" size={12} /></button>
            </PanelHead>
            <PanelTools>
              <ToolButton $state="on" aria-label="listDrawing"><Icon name="listDrawing" /></ToolButton>
              <Tools items={["listSource", "listVisibility", "listSelection", "|", "options"]} />
            </PanelTools>
            <Tree>
              <TreeRow $indent={8} $bold>
                <Expander aria-label="图层" />
                <RowIcon><Icon name="layers" /></RowIcon>
                图层
              </TreeRow>
              {layers.map((layer) => (
                <React.Fragment key={layer.name}>
                  <TreeRow $indent={27}>
                    <Expander aria-label={layer.name} />
                    <LayerLabel>
                      <LayerCheck type="checkbox" defaultChecked />
                      {layer.name}
                    </LayerLabel>
                  </TreeRow>
                  <TreeRow $indent={59}>
                    <Swatch $color={layer.color} />
                  </TreeRow>
                </React.Fragment>
              ))}
            </Tree>
          </Panel>

          <MapFrame>
            <Canvas>
              <MapView />
            </Canvas>
            <VScroll>
              <ScrollButton aria-label="向上"><Icon name="arrUp" /></ScrollButton>
              <Thumb />
              <ScrollButton aria-label="向下"><Icon name="arrDown" /></ScrollButton>
            </VScroll>
            <HScroll>
              <ViewButton $on aria-label="数据视图"><Icon name="dataView" size={10} /></ViewButton>
              <ViewButton aria-label="布局视图"><Icon name="layoutView" size={10} /></ViewButton>
              <ViewSep />
              <ViewButton aria-label="刷新"><Icon name="refresh" size={10} /></ViewButton>
              <ViewButton aria-label="暂停"><Icon name="pause" size={8} /></ViewButton>
              <ScrollButton $row aria-label="向左"><Icon name="arrLeft" /></ScrollButton>
              <Thumb $row />
              <ScrollButton $row aria-label="向右"><Icon name="arrRight" /></ScrollButton>
            </HScroll>
          </MapFrame>

          <Panel>
            <PanelHead>
              <span>结果</span>
              <button aria-label="自动隐藏"><Icon name="pin" size={12} /></button>
              <button aria-label="关闭"><Icon name="close" size={12} /></button>
            </PanelHead>
            <Tree $side>
              <TreeRow $compact $indent={17}>
                <RowIcon><Icon name="cascade" /></RowIcon>
                当前会话
              </TreeRow>
              <TreeRow $compact $indent={8}>
                <Expander $closed aria-label="前一个会话" />
                <RowIcon><Icon name="cascade" /></RowIcon>
                前一个会话
              </TreeRow>
              <TreeRow $compact $indent={17}>
                <RowIcon><Icon name="cascade" /></RowIcon>
                共享
              </TreeRow>
            </Tree>
            <BottomTabs>
              <BottomTab $on><Icon name="hammer" />结果</BottomTab>
              <BottomTab><Icon name="toolbox" />ArcToolbox</BottomTab>
            </BottomTabs>
          </Panel>

          <SideTabs>
            <SideTabGroup>
              <SideTab><Icon name="sketch" /><span>编辑草图属性</span></SideTab>
              <SideTab><Icon name="create" /><span>创建要素</span></SideTab>
            </SideTabGroup>
            <SideTabGroup>
              <SideTab><Icon name="catalog" /><span>目录</span></SideTab>
              <SideTab><Icon name="search" /><span>搜索</span></SideTab>
            </SideTabGroup>
            <SideTabGroup>
              <SideTab $plain><span>控制点</span></SideTab>
            </SideTabGroup>
          </SideTabs>
        </Main>

        <StatusBar>
          <span>119.988</span>
          <span>31 十进制度</span>
        </StatusBar>

        <TaskBar>
          <TaskButton aria-label="开始"><Icon name="start" size={20} /></TaskButton>
          <TaskButton aria-label="搜索"><Icon name="taskSearch" size={20} /></TaskButton>
          <Apps>
            <AppButton aria-label="Chrome"><Icon name="chrome" size={27} /></AppButton>
            <AppButton aria-label="文件资源管理器"><Icon name="explorer" size={27} /></AppButton>
            <AppButton aria-label="WPS"><Icon name="wps" size={26} /></AppButton>
            <AppButton $on aria-label="ArcMap"><Icon name="arcmap" size={29} /></AppButton>
          </Apps>
          <Tray>
            <TrayButton aria-label="显示隐藏的图标"><Icon name="trayUp" /></TrayButton>
            <TrayButton aria-label="USB"><Icon name="usb" size={17} /></TrayButton>
            <TrayButton aria-label="QQ"><Icon name="qq" size={18} /></TrayButton>
            <TrayButton aria-label="音量"><Icon name="speaker" size={20} /></TrayButton>
            <TrayButton aria-label="网络"><Icon name="wifi" /></TrayButton>
            <TrayButton>中</TrayButton>
            <TrayButton aria-label="搜狗输入法"><Icon name="sogou" size={19} /></TrayButton>
            <Clock>
              15:40
              <br />
              2021/7/14
            </Clock>
            <NotifyButton aria-label="通知"><Icon name="notify" size={20} /></NotifyButton>
          </Tray>
        </TaskBar>
      </Window>

      <ImeBar>
        <Icon name="sogou" size={28} />
        中
        <Icon name="imeGrid" size={13} />
      </ImeBar>
      <LevelMeter />
    </>
  );
}
